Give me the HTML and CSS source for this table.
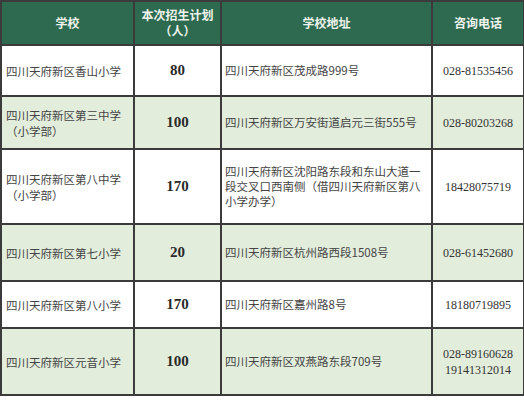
FILE: index.html
```html
<!DOCTYPE html>
<html lang="zh">
<head>
<meta charset="utf-8">
<link rel="stylesheet" href="styles.css">
</head>
<body>
<table class="plan">
  <colgroup>
    <col class="c-school">
    <col class="c-num">
    <col class="c-addr">
    <col class="c-tel">
  </colgroup>
  <thead>
    <tr class="r-head">
      <th>学校</th>
      <th>本次招生计划<br>（人）</th>
      <th>学校地址</th>
      <th>咨询电话</th>
    </tr>
  </thead>
  <tbody>
    <tr class="r1">
      <td class="school">四川天府新区香山小学</td>
      <td class="num">80</td>
      <td class="addr">四川天府新区茂成路999号</td>
      <td class="tel">028-81535456</td>
    </tr>
    <tr class="r2 alt">
      <td class="school">四川天府新区第三中学<br>（小学部）</td>
      <td class="num">100</td>
      <td class="addr">四川天府新区万安街道启元三街555号</td>
      <td class="tel">028-80203268</td>
    </tr>
    <tr class="r3">
      <td class="school">四川天府新区第八中学<br>（小学部）</td>
      <td class="num">170</td>
      <td class="addr">四川天府新区沈阳路东段和东山大道一段交叉口西南侧（借四川天府新区第八小学办学）</td>
      <td class="tel">18428075719</td>
    </tr>
    <tr class="r4 alt">
      <td class="school">四川天府新区第七小学</td>
      <td class="num">20</td>
      <td class="addr">四川天府新区杭州路西段1508号</td>
      <td class="tel">028-61452680</td>
    </tr>
    <tr class="r5">
      <td class="school">四川天府新区第八小学</td>
      <td class="num">170</td>
      <td class="addr">四川天府新区嘉州路8号</td>
      <td class="tel">18180719895</td>
    </tr>
    <tr class="r6 alt">
      <td class="school">四川天府新区元音小学</td>
      <td class="num">100</td>
      <td class="addr">四川天府新区双燕路东段709号</td>
      <td class="tel">028-89160628<br>19141312014</td>
    </tr>
  </tbody>
</table>
</body>
</html>
```

FILE: styles.css
```css
html, body {
  margin: 0;
  padding: 0;
  background: #ffffff;
}

body {
  font-family: "Noto Sans CJK SC", "Liberation Serif", serif;
  color: #3a3a3a;
}

.plan {
  border-collapse: collapse;
  table-layout: fixed;
  width: 523px;
  border: 2px solid #3b3b3b;
}

.c-school { width: 133px; }
.c-num { width: 87px; }
.c-addr { width: 211px; }
.c-tel { width: 92px; }

.plan th,
.plan td {
  border: 2px solid #3b3b3b;
  padding: 0;
  vertical-align: middle;
}

.plan th {
  background: #2d6a4f;
  color: #eef3ec;
  font-size: 12px;
  font-weight: 700;
  line-height: 16px;
  text-align: center;
}

.r-head { height: 44px; }
.r1 { height: 51px; }
.r2 { height: 53px; }
.r3 { height: 75px; }
.r4 { height: 57px; }
.r5 { height: 47px; }
.r6 { height: 67px; }

.alt td {
  background: #e2eddb;
}

.school {
  font-size: 11.5px;
  line-height: 16px;
  padding-left: 4px !important;
  text-align: left;
  color: #444444;
}

.num {
  font-family: "Liberation Serif", serif;
  font-weight: 700;
  font-size: 15px;
  text-align: center;
  color: #2a2a2a;
}

.addr {
  font-size: 11.5px;
  line-height: 15px;
  padding-left: 3px !important;
  text-align: left;
  color: #444444;
}

.tel {
  font-family: "Liberation Serif", serif;
  font-size: 12px;
  line-height: 16px;
  text-align: center;
  color: #333333;
}
```
